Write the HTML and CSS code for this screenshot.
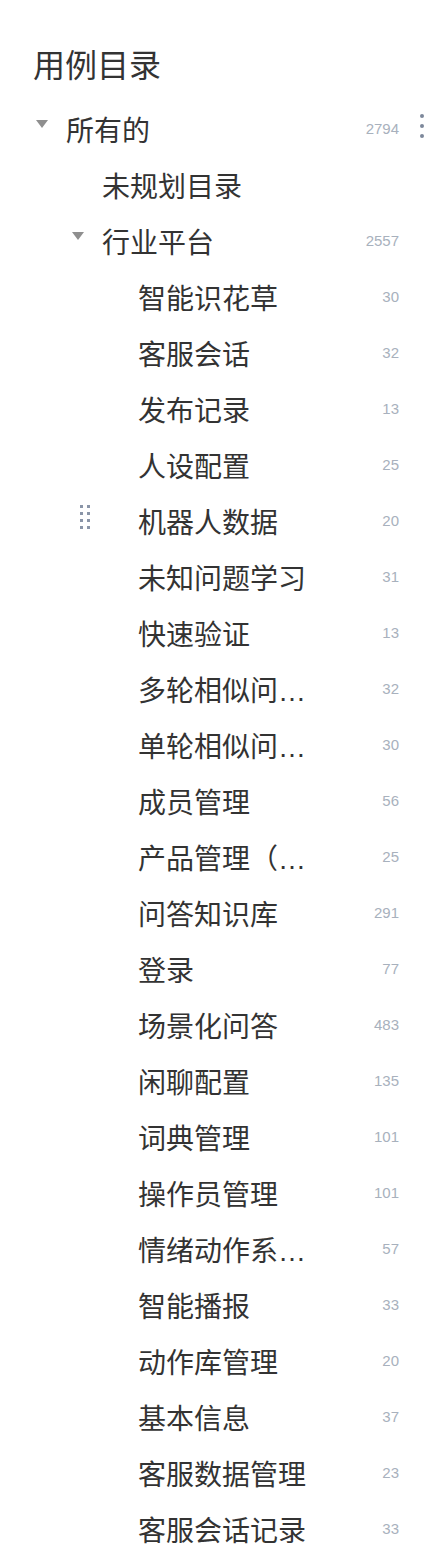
FILE: index.html
```html
<!DOCTYPE html>
<html lang="zh">
<head>
<meta charset="utf-8">
<title>用例目录</title>
<link rel="stylesheet" href="styles.css">
</head>
<body>
<div class="panel">
  <h1 class="title">用例目录</h1>
  <ul class="tree">
    <li class="row lv0">
      <span class="toggle"><svg width="12" height="8" viewBox="0 0 12 8"><polygon points="0,0 12,0 6,8" fill="#8f8f8f"/></svg></span>
      <span class="label">所有的</span>
      <span class="count">2794</span>
      <span class="more"><i></i><i></i><i></i></span>
    </li>
    <li class="row lv1"><span class="toggle"></span><span class="label">未规划目录</span></li>
    <li class="row lv1">
      <span class="toggle"><svg width="12" height="8" viewBox="0 0 12 8"><polygon points="0,0 12,0 6,8" fill="#8f8f8f"/></svg></span>
      <span class="label">行业平台</span>
      <span class="count">2557</span>
    </li>
    <li class="row lv2"><span class="toggle"></span><span class="label">智能识花草</span><span class="count">30</span></li>
    <li class="row lv2"><span class="toggle"></span><span class="label">客服会话</span><span class="count">32</span></li>
    <li class="row lv2"><span class="toggle"></span><span class="label">发布记录</span><span class="count">13</span></li>
    <li class="row lv2"><span class="toggle"></span><span class="label">人设配置</span><span class="count">25</span></li>
    <li class="row lv2">
      <span class="drag"><i></i><i></i><i></i><i></i><i></i><i></i><i></i><i></i></span>
      <span class="toggle"></span><span class="label">机器人数据</span><span class="count">20</span>
    </li>
    <li class="row lv2"><span class="toggle"></span><span class="label">未知问题学习</span><span class="count">31</span></li>
    <li class="row lv2"><span class="toggle"></span><span class="label">快速验证</span><span class="count">13</span></li>
    <li class="row lv2"><span class="toggle"></span><span class="label">多轮相似问题管理</span><span class="count">32</span></li>
    <li class="row lv2"><span class="toggle"></span><span class="label">单轮相似问题管理</span><span class="count">30</span></li>
    <li class="row lv2"><span class="toggle"></span><span class="label">成员管理</span><span class="count">56</span></li>
    <li class="row lv2"><span class="toggle"></span><span class="label">产品管理（新版）</span><span class="count">25</span></li>
    <li class="row lv2"><span class="toggle"></span><span class="label">问答知识库</span><span class="count">291</span></li>
    <li class="row lv2"><span class="toggle"></span><span class="label">登录</span><span class="count">77</span></li>
    <li class="row lv2"><span class="toggle"></span><span class="label">场景化问答</span><span class="count">483</span></li>
    <li class="row lv2"><span class="toggle"></span><span class="label">闲聊配置</span><span class="count">135</span></li>
    <li class="row lv2"><span class="toggle"></span><span class="label">词典管理</span><span class="count">101</span></li>
    <li class="row lv2"><span class="toggle"></span><span class="label">操作员管理</span><span class="count">101</span></li>
    <li class="row lv2"><span class="toggle"></span><span class="label">情绪动作系统配置</span><span class="count">57</span></li>
    <li class="row lv2"><span class="toggle"></span><span class="label">智能播报</span><span class="count">33</span></li>
    <li class="row lv2"><span class="toggle"></span><span class="label">动作库管理</span><span class="count">20</span></li>
    <li class="row lv2"><span class="toggle"></span><span class="label">基本信息</span><span class="count">37</span></li>
    <li class="row lv2"><span class="toggle"></span><span class="label">客服数据管理</span><span class="count">23</span></li>
    <li class="row lv2"><span class="toggle"></span><span class="label">客服会话记录</span><span class="count">33</span></li>
  </ul>
</div>
</body>
</html>
```

FILE: styles.css
```css
html, body {
  margin: 0;
  padding: 0;
  background: #ffffff;
}
body {
  font-family: "Liberation Sans", "Noto Sans CJK SC", sans-serif;
  color: #333333;
  overflow: hidden;
}
.panel {
  padding-top: 46px;
  width: 426px;
}
.title {
  margin: 0 0 18px 33px;
  font-size: 32px;
  line-height: 40px;
  font-weight: 400;
  color: #333333;
}
.tree {
  list-style: none;
  margin: 0;
  padding: 0;
}
.row {
  position: relative;
  display: flex;
  align-items: center;
  height: 56px;
  padding-right: 27px;
}
.lv0 { padding-left: 30px; }
.lv1 { padding-left: 66px; }
.lv2 { padding-left: 102px; }
.toggle {
  flex: 0 0 36px;
  display: flex;
  align-items: center;
  height: 56px;
}
.toggle svg {
  margin-left: 6px;
  margin-bottom: 16px;
}
.label {
  font-size: 28px;
  line-height: 56px;
  white-space: nowrap;
  overflow: hidden;
  text-overflow: ellipsis;
  max-width: 170px;
  color: #333333;
}
.lv0 .label, .lv1 .label { max-width: 240px; }
.count {
  margin-left: auto;
  margin-bottom: 8px;
  font-size: 15px;
  color: #a8b1bd;
}
.more {
  position: absolute;
  left: 420px;
  top: 10px;
  display: flex;
  flex-direction: column;
  gap: 6px;
}
.more i {
  display: block;
  width: 4px;
  height: 4px;
  border-radius: 50%;
  background: #7d889b;
}
.drag {
  position: absolute;
  left: 80px;
  top: 9px;
  display: grid;
  grid-template-columns: 3px 3px;
  column-gap: 4px;
  row-gap: 4px;
}
.drag i {
  display: block;
  width: 3px;
  height: 3px;
  background: #8a95a8;
}
```
